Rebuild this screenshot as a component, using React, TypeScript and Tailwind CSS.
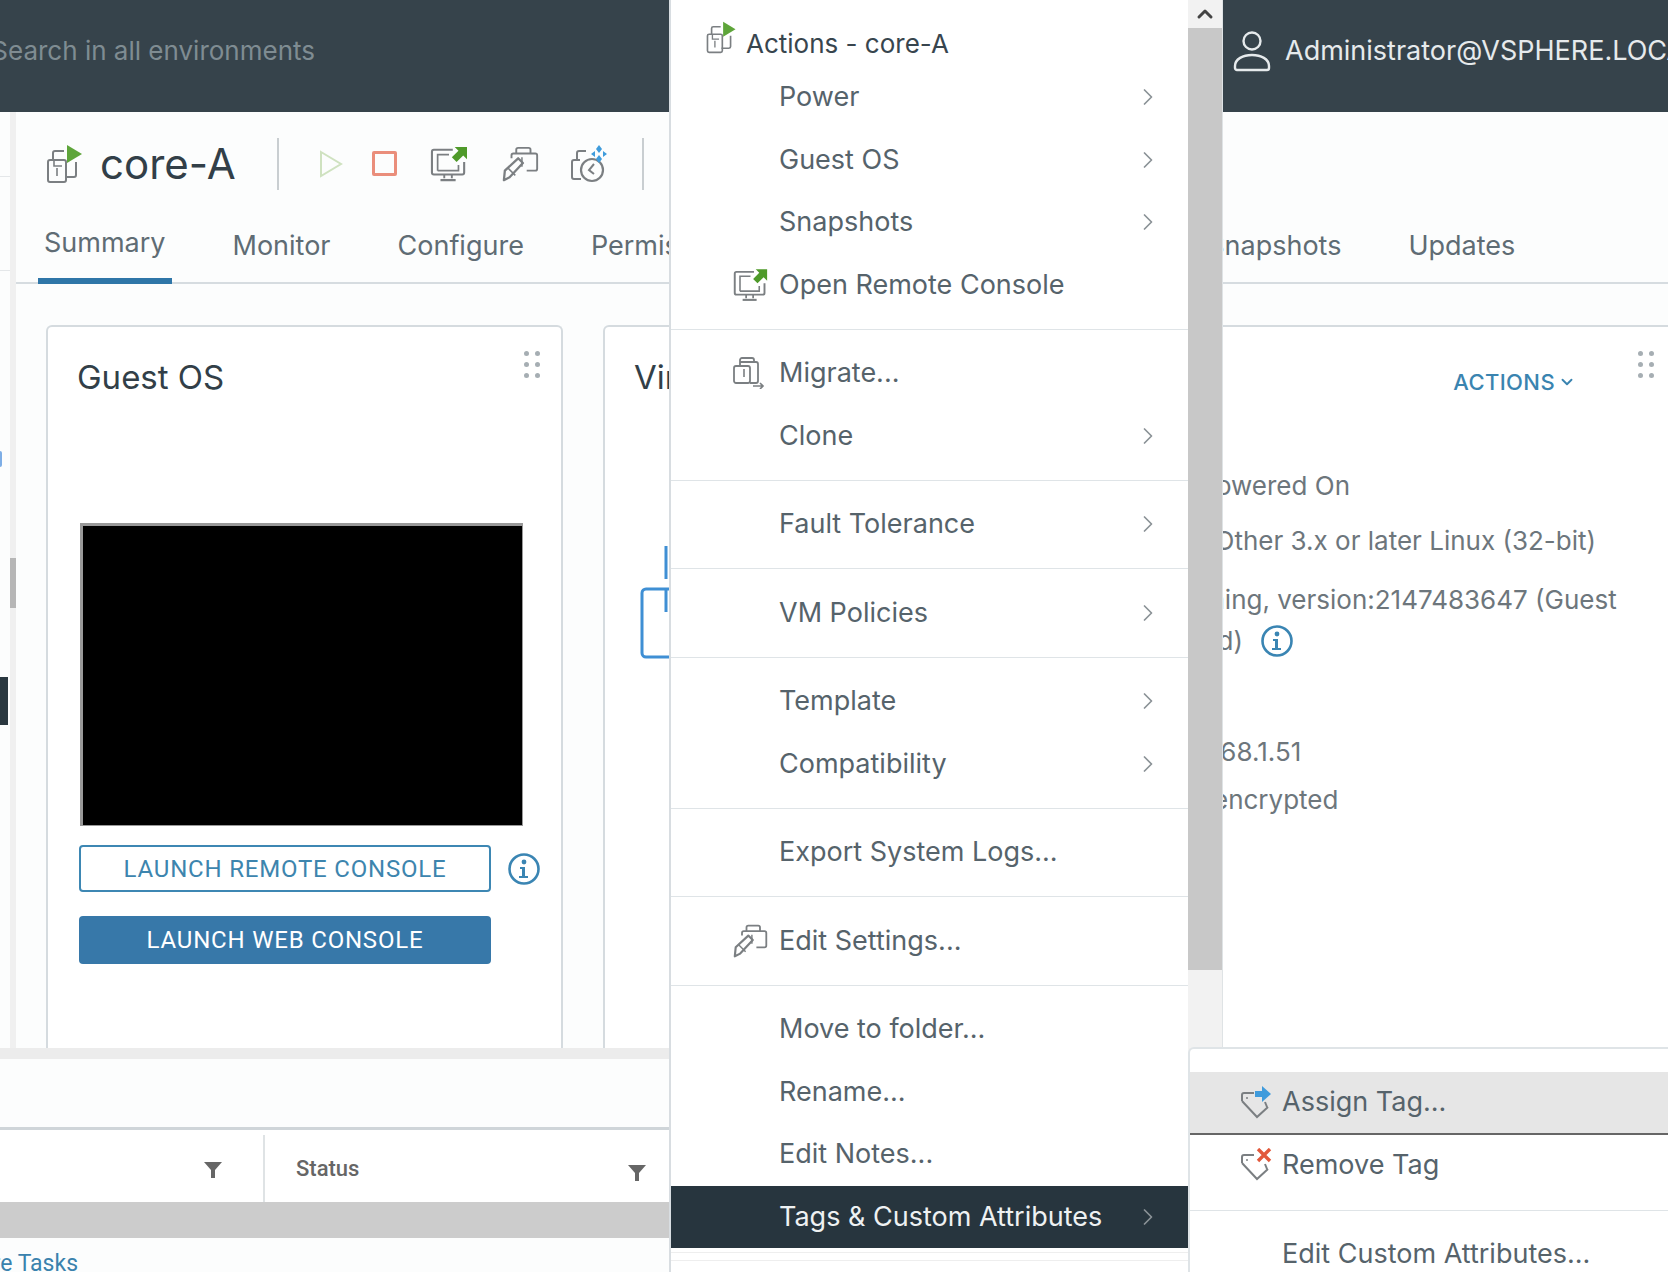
import React from 'react';
import { ChevronDown, ChevronRight, ChevronUp } from 'lucide-react';

const GRAY = '#7b7f82';

const VmIcon: React.FC<{ className?: string }> = ({ className }) => (
  <svg viewBox="0 0 38 40" fill="none" className={className}>
    <path d="M7 16V9a2 2 0 0 1 2-2h9" stroke={GRAY} strokeWidth="2" />
    <path d="M30 18v13a2 2 0 0 1-2 2h-9" stroke={GRAY} strokeWidth="2" />
    <rect x="2" y="16" width="18" height="22" rx="2" stroke={GRAY} strokeWidth="2" />
    <path d="M11 24v8M8 16v6h8" stroke={GRAY} strokeWidth="1.6" />
    <path d="M21 1l15 9-15 9z" fill="#5ea53a" />
  </svg>
);

const RemoteIcon: React.FC<{ className?: string }> = ({ className }) => (
  <svg viewBox="0 0 40 38" fill="none" className={className}>
    <path d="M24 4H4a2 2 0 0 0-2 2v22a2 2 0 0 0 2 2h30a2 2 0 0 0 2-2V17" stroke={GRAY} strokeWidth="2.2" />
    <path d="M8 26V9h12M8 26h22v-6" stroke={GRAY} strokeWidth="1.8" />
    <path d="M15 30v4M23 30v4" stroke={GRAY} strokeWidth="2" />
    <path d="M11 36h16" stroke={GRAY} strokeWidth="2.4" />
    <path d="M26 1h13v13l-4-4-7 7-5-5 7-7z" fill="#4f9a2a" />
  </svg>
);

const EditIcon: React.FC<{ className?: string }> = ({ className }) => (
  <svg viewBox="0 0 40 40" fill="none" className={className}>
    <path d="M15 9V5a2 2 0 0 1 2-2h11a2 2 0 0 1 2 2v4" stroke={GRAY} strokeWidth="2" />
    <path d="M10 14v-3a2 2 0 0 1 2-2h23a2 2 0 0 1 2 2v14a2 2 0 0 1-2 2h-9" stroke={GRAY} strokeWidth="2" />
    <path d="M21 13v10" stroke={GRAY} strokeWidth="1.6" />
    <path d="M3 27l14-13 5 5-14 15-6 3z" stroke={GRAY} strokeWidth="2.4" strokeLinejoin="round" />
    <path d="M6 24l8 8" stroke={GRAY} strokeWidth="1.6" />
  </svg>
);

const SnapshotIcon: React.FC<{ className?: string }> = ({ className }) => (
  <svg viewBox="0 0 38 38" fill="none" className={className}>
    <path d="M7 15V8a2 2 0 0 1 2-2h7" stroke={GRAY} strokeWidth="2" />
    <path d="M11 34H4a2 2 0 0 1-2-2V17a2 2 0 0 1 2-2h6" stroke={GRAY} strokeWidth="2" />
    <circle cx="22" cy="25" r="11" stroke={GRAY} strokeWidth="2.2" />
    <path d="M24 19l-5 6 5 4" stroke={GRAY} strokeWidth="2" />
    <path d="M29 0l3 4-3 4-3-4zM29 10l3 4-3 4-3-4zM21 9l4-3 0 6zM37 9l-4-3 0 6z" fill="#3f9cdc" />
  </svg>
);

const MigrateIcon: React.FC<{ className?: string }> = ({ className }) => (
  <svg viewBox="0 0 32 32" fill="none" className={className}>
    <path d="M7 9V3a2 2 0 0 1 2-2h10a2 2 0 0 1 2 2v2" stroke={GRAY} strokeWidth="1.8" />
    <rect x="1" y="9" width="16" height="17" rx="2" stroke={GRAY} strokeWidth="1.8" />
    <path d="M7 5h16a2 2 0 0 1 2 2v17a2 2 0 0 1-2 2h-6" stroke={GRAY} strokeWidth="1.8" />
    <path d="M11 12v8" stroke={GRAY} strokeWidth="1.6" />
    <path d="M20 29h10M27 26l3 3-3 3" stroke={GRAY} strokeWidth="1.6" />
  </svg>
);

const TagIcon: React.FC<{ badge: 'assign' | 'remove' }> = ({ badge }) => (
  <svg viewBox="0 0 32 34" fill="none" className="h-[34px] w-[32px]">
    <path d="M2 15V9a2 2 0 0 1 2-2h10" stroke={GRAY} strokeWidth="2" />
    <path d="M2 15l15 16 11-10" stroke={GRAY} strokeWidth="2" />
    <path d="M25 16l2 5" stroke={GRAY} strokeWidth="2" />
    <circle cx="7" cy="12" r="1" fill={GRAY} />
    {badge === 'assign' ? (
      <path d="M15 5h7V0l9 8-9 8v-5h-7z" fill="#3f9bdc" />
    ) : (
      <path d="M18 1l12 12M30 1L18 13" stroke="#e2593c" strokeWidth="3.4" />
    )}
  </svg>
);

const InfoIcon: React.FC = () => (
  <svg viewBox="0 0 32 32" fill="none" className="h-[32px] w-[32px] shrink-0">
    <circle cx="16" cy="16" r="14.5" stroke="#3a85b3" strokeWidth="2.6" />
    <circle cx="16" cy="9" r="2.4" fill="#3a85b3" />
    <path d="M12 14h5v9h3v2h-9v-2h3v-7h-2z" fill="#3a85b3" />
  </svg>
);

const UserIcon: React.FC = () => (
  <svg viewBox="0 0 38 42" fill="none" className="h-[42px] w-[38px] shrink-0">
    <circle cx="19" cy="11" r="8.5" stroke="#e6eaec" strokeWidth="2.4" />
    <path d="M2 36c0-7 8-11 17-11s17 4 17 11v2a2 2 0 0 1-2 2H4a2 2 0 0 1-2-2z" stroke="#e6eaec" strokeWidth="2.4" />
  </svg>
);

const FilterIcon: React.FC = () => (
  <svg viewBox="0 0 18 18" className="h-[18px] w-[18px] shrink-0">
    <path d="M0 1h18l-7 8v8H7V9z" fill="#666" />
  </svg>
);

const DragDots: React.FC = () => (
  <div className="grid w-[16px] grid-cols-2 gap-x-[6px] gap-y-[6px]">
    {[0, 1, 2, 3, 4, 5].map(i => (
      <span key={i} className="h-[5px] w-[5px] rounded-full bg-[#a6aeb3]" />
    ))}
  </div>
);

type MenuItem = { label: string; icon?: React.ReactNode; sub?: boolean; active?: boolean };

const menuSections: MenuItem[][] = [
  [
    { label: 'Power', sub: true },
    { label: 'Guest OS', sub: true },
    { label: 'Snapshots', sub: true },
    { label: 'Open Remote Console', icon: <RemoteIcon className="h-[34px] w-[35px]" /> },
  ],
  [
    { label: 'Migrate...', icon: <MigrateIcon className="h-[32px] w-[32px]" /> },
    { label: 'Clone', sub: true },
  ],
  [{ label: 'Fault Tolerance', sub: true }],
  [{ label: 'VM Policies', sub: true }],
  [
    { label: 'Template', sub: true },
    { label: 'Compatibility', sub: true },
  ],
  [{ label: 'Export System Logs...' }],
  [{ label: 'Edit Settings...', icon: <EditIcon className="h-[36px] w-[36px]" /> }],
  [
    { label: 'Move to folder...' },
    { label: 'Rename...' },
    { label: 'Edit Notes...' },
    { label: 'Tags & Custom Attributes', sub: true, active: true },
  ],
];

const MenuRow: React.FC<{ item: MenuItem }> = ({ item }) => (
  <div
    className={`flex h-[62.5px] shrink-0 items-center pr-[26px] pl-[62px] text-[27px] ${
      item.active ? 'bg-[#27353e] text-[#eef1f2]' : 'text-[#56636b]'
    }`}
  >
    <span className="flex w-[46px] shrink-0 items-center">{item.icon}</span>
    <span className="flex-1 whitespace-nowrap">{item.label}</span>
    {item.sub && <ChevronRight size={28} strokeWidth={1.5} className="shrink-0 text-[#8b9297]" />}
  </div>
);

const ActionsMenu: React.FC = () => (
  <div className="absolute top-0 left-[669px] z-10 flex h-full w-[554px] border-l-2 border-[#d8dde1] bg-white">
    <div className="flex min-w-0 flex-1 flex-col">
      <div className="flex h-[66px] shrink-0 items-center gap-[8px] pt-[20px] pl-[34px] text-[26px] text-[#38454e]">
        <VmIcon className="mt-[-12px] h-[33px] w-[33px]" />
        <span>Actions - core-A</span>
      </div>
      {menuSections.map((section, i) => (
        <div key={i} className={i > 0 ? 'mt-[12.5px] border-t border-[#dfe4e7] pt-[12.5px]' : ''}>
          {section.map(item => (
            <MenuRow key={item.label} item={item} />
          ))}
        </div>
      ))}
      <div className="mt-[4px] h-[9px] border-y border-[#eeeeee]" />
    </div>
    <div className="flex w-[35px] shrink-0 flex-col border-r border-[#dfe3e5] bg-[#f2f2f2]">
      <div className="flex h-[28px] items-center justify-center">
        <ChevronUp size={24} strokeWidth={3} className="text-[#444]" />
      </div>
      <div className="h-[942px] bg-[#c8c8c8]" />
    </div>
  </div>
);

const TagsSubmenu: React.FC = () => (
  <div className="absolute top-[1047px] right-0 bottom-0 left-[1188px] z-20 rounded-tl-md border-t-2 border-l-2 border-[#dfe4e7] bg-white pt-[23px] text-[27px] text-[#56636b]">
    <div className="flex h-[63px] items-center gap-[10px] border-b-2 border-[#666] bg-[#e6e6e6] pl-[50px]">
      <TagIcon badge="assign" />
      <span>Assign Tag...</span>
    </div>
    <div className="flex h-[60px] items-center gap-[10px] pl-[50px]">
      <TagIcon badge="remove" />
      <span>Remove Tag</span>
    </div>
    <div className="mt-[15px] border-t border-[#dfe4e7] pt-[13px]">
      <div className="flex h-[60px] items-center pl-[92px]">Edit Custom Attributes...</div>
    </div>
  </div>
);

const Sidebar: React.FC = () => (
  <div className="flex w-[16px] shrink-0">
    <div className="flex w-[10px] flex-col">
      <div className="mt-[64px] h-px bg-[#e4e7e9]" />
      <div className="mt-[93px] h-px bg-[#e4e7e9]" />
      <div className="mt-[180px] h-[16px] w-[2px] rounded-r-full bg-[#7eaee6]" />
      <div className="mt-[210px] h-[48px] w-[8px] bg-[#2a3840]" />
    </div>
    <div className="w-[6px] bg-[#f0f0f0] pt-[446px]">
      <div className="h-[50px] bg-[#b6b6b6]" />
    </div>
  </div>
);

const GuestOsCard: React.FC = () => (
  <div className="flex w-[517px] shrink-0 flex-col rounded-t-md border-x-2 border-t-2 border-[#d5dbdf] bg-white">
    <div className="flex items-start justify-between pt-[24px] pr-[21px] pl-[29px]">
      <h2 className="mt-[6px] text-[33px] leading-[40px] text-[#323f48]">Guest OS</h2>
      <DragDots />
    </div>
    <div className="mt-[126px] ml-[32px] h-[303px] w-[443px] border-t-[3px] border-r border-b border-l-[3px] border-[#999] bg-black" />
    <div className="mt-[19px] ml-[31px] flex items-center gap-[17px]">
      <button className="h-[47px] w-[412px] rounded-[4px] border-2 border-[#3d87b3] font-['Roboto',sans-serif] text-[24px] tracking-[0.8px] text-[#3d85ae]">
        LAUNCH REMOTE CONSOLE
      </button>
      <InfoIcon />
    </div>
    <button className="mt-[24px] ml-[31px] h-[48px] w-[412px] rounded-[4px] bg-[#3778a9] font-['Roboto',sans-serif] text-[24px] tracking-[0.8px] text-white">
      LAUNCH WEB CONSOLE
    </button>
  </div>
);

const HardwareCard: React.FC = () => (
  <div className="flex w-[517px] shrink-0 flex-col rounded-t-md border-x-2 border-t-2 border-[#d5dbdf] bg-white">
    <h2 className="mt-[30px] pl-[29px] text-[33px] leading-[40px] whitespace-nowrap text-[#323f48]">Virtual Hardware</h2>
    <svg viewBox="0 0 60 115" fill="none" className="mt-[148px] ml-[35px] h-[115px] w-[60px]">
      <path d="M60 44H6a4 4 0 0 0-4 4v60a4 4 0 0 0 4 4h54" stroke="#3f8fd4" strokeWidth="3" />
      <path d="M26 1v33M26 44v23" stroke="#3f8fd4" strokeWidth="3" />
    </svg>
  </div>
);

const DetailsCard: React.FC = () => (
  <div className="flex w-[517px] shrink-0 flex-col rounded-t-md border-x-2 border-t-2 border-[#d5dbdf] bg-white text-[26px] leading-[30px] whitespace-nowrap text-[#6d767c]">
    <div className="flex items-start justify-end pt-[24px] pr-[21px]">
      <div className="mt-[17px] flex items-center text-[22px] leading-[28px] font-medium tracking-[0.4px] text-[#3a84b0]">
        <span>ACTIONS</span>
        <ChevronDown size={18} strokeWidth={2.5} className="ml-[3px]" />
      </div>
      <div className="ml-[62px]">
        <DragDots />
      </div>
    </div>
    <div className="mt-[75px] pr-[325px] text-right">Powered On</div>
    <div className="mt-[25px] pr-[79px] text-right">Other 3.x or later Linux (32-bit)</div>
    <div className="mt-[29px] pr-[81px] text-right">Running, version:2147483647 (Guest</div>
    <div className="mt-[10px] flex items-center justify-end gap-[18px] pr-[382px]">
      <span>managed)</span>
      <InfoIcon />
    </div>
    <div className="mt-[80px] pr-[424px] text-right">192.168.1.51</div>
    <div className="mt-[18px] pr-[371px] text-right">Not encrypted</div>
  </div>
);

const tabs = ['Summary', 'Monitor', 'Configure', 'Permissions', 'Datastores', 'Networks', 'Snapshots', 'Updates'];

export default function App() {
  return (
    <div className="relative flex h-[1272px] w-[1668px] flex-col overflow-hidden bg-[#fcfdfd] font-['Inter',sans-serif]">
      <header className="flex h-[112px] shrink-0 items-center bg-[#36434b]">
        <div className="flex w-[315px] justify-end overflow-hidden pb-[12px] text-[26px] whitespace-nowrap text-[#7f8c92]">
          Search in all environments
        </div>
        <div className="ml-auto flex w-[435px] items-center gap-[14px] overflow-hidden pb-[10px] text-[27px] whitespace-nowrap text-[#e6eaec]">
          <UserIcon />
          <span>Administrator@VSPHERE.LOCAL</span>
        </div>
      </header>

      <div className="flex h-[936px] shrink-0">
        <Sidebar />
        <main className="flex min-w-0 flex-1 flex-col">
          <div className="flex h-[103px] shrink-0 items-center pl-[30px]">
            <VmIcon className="h-[40px] w-[38px]" />
            <h1 className="ml-[16px] w-[177px] text-[42px] text-[#323f48]">core-A</h1>
            <div className="h-[52px] w-[2px] bg-[#c9ced1]" />
            <svg viewBox="0 0 24 28" fill="none" className="ml-[40px] h-[28px] w-[24px]">
              <path d="M2 2l20 12L2 26z" stroke="#cfe2c0" strokeWidth="2" />
            </svg>
            <div className="ml-[29px] h-[25px] w-[25px] rounded-[2px] border-[3px] border-[#ea8e7b]" />
            <RemoteIcon className="ml-[33px] h-[36px] w-[38px]" />
            <EditIcon className="ml-[34px] h-[38px] w-[38px]" />
            <SnapshotIcon className="ml-[30px] h-[38px] w-[38px]" />
            <div className="ml-[34px] h-[52px] w-[2px] bg-[#c9ced1]" />
          </div>

          <nav className="flex h-[69px] shrink-0 gap-[55px] border-b-2 border-[#d6dce0] pl-[22px] text-[27px] text-[#5f6c74]">
            {tabs.map(tab => (
              <div
                key={tab}
                className={`-mb-[2px] flex h-[69px] items-center px-[6px] pb-[6px] ${
                  tab === 'Summary' ? 'border-b-[6px] border-[#2f76a8] pb-0' : ''
                }`}
              >
                {tab}
              </div>
            ))}
          </nav>

          <div className="mt-[41px] flex min-h-0 flex-1 gap-[40px] overflow-hidden pl-[30px]">
            <GuestOsCard />
            <HardwareCard />
            <DetailsCard />
          </div>
        </main>
      </div>

      <div className="h-[11px] shrink-0 bg-[#ececec]" />
      <div className="h-[71px] shrink-0 border-b-[3px] border-[#cfd5d9]" />
      <div className="flex h-[72px] shrink-0 bg-white font-['Roboto',sans-serif] text-[22px] font-medium text-[#666]">
        <div className="flex w-[263px] items-center justify-end pt-[8px] pr-[41px]">
          <FilterIcon />
        </div>
        <div className="mt-[5px] flex w-[407px] items-center justify-between border-l-2 border-[#dfe3e5] pr-[24px] pl-[31px]">
          <span>Status</span>
          <span className="pt-[8px]">
            <FilterIcon />
          </span>
        </div>
      </div>
      <div className="h-[36px] shrink-0 bg-[#cccccc]" />
      <div className="flex w-[78px] justify-end overflow-hidden pt-[9px] font-['Roboto',sans-serif] text-[23px] whitespace-nowrap text-[#3a82ad]">
        More Tasks
      </div>

      <ActionsMenu />
      <TagsSubmenu />
    </div>
  );
}
